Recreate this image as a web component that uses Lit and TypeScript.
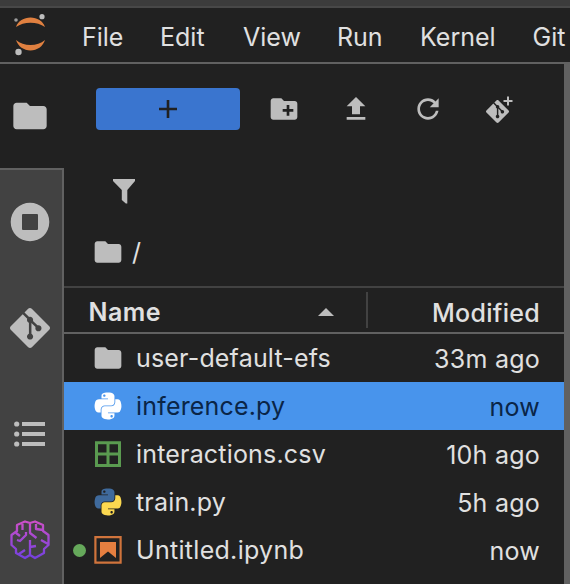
import { LitElement, html, css, svg } from "lit";
import { customElement } from "lit/decorators.js";

const FOLDER = "M10 4H4c-1.1 0-1.99.9-1.99 2L2 18c0 1.1.9 2 2 2h16c1.1 0 2-.9 2-2V8c0-1.1-.9-2-2-2h-8l-2-2z";
const GIT = "M23.546 10.93L13.067.452c-.604-.603-1.582-.603-2.188 0L8.708 2.627l2.76 2.76c.645-.215 1.379-.07 1.889.441.516.515.658 1.258.438 1.9l2.658 2.66c.645-.223 1.387-.078 1.9.435.721.72.721 1.884 0 2.604-.719.719-1.881.719-2.6 0-.539-.541-.674-1.337-.404-1.996L12.86 8.955v6.525c.176.086.342.203.488.348.713.721.713 1.883 0 2.6-.719.721-1.889.721-2.609 0-.719-.719-.719-1.879 0-2.598.182-.18.387-.316.605-.406V8.835c-.217-.091-.424-.222-.6-.401-.545-.545-.676-1.342-.396-2.009L7.636 3.7.45 10.881c-.6.605-.6 1.584 0 2.189l10.48 10.477c.604.604 1.582.604 2.186 0l10.43-10.43c.605-.603.605-1.582 0-2.187";
const PY_TOP = "M 54.918785,9.1927421e-4 C 50.335132,0.02221727 45.957846,0.41313697 42.106285,1.0946693 30.760069,3.0991731 28.700036,7.2947714 28.700035,15.032169 v 10.21875 h 26.8125 v 3.40625 h -26.8125 -10.0625 c -7.792459,0 -14.6157588,4.683717 -16.7499998,13.59375 -2.46181998,10.212966 -2.57101508,16.586023 0,27.25 1.9059283,7.937852 6.4575432,13.593748 14.2499998,13.59375 h 9.21875 v -12.25 c 0,-8.849902 7.657144,-16.656248 16.75,-16.65625 h 26.78125 c 7.454951,0 13.406253,-6.138164 13.40625,-13.625 v -25.53125 c 0,-7.2663386 -6.12998,-12.7247771 -13.40625,-13.9374997 C 64.281548,0.32794397 59.502438,-0.02037903 54.918785,9.1927421e-4 Z m -14.5,8.21875012579 c 2.769547,0 5.03125,2.2986456 5.03125,5.1249996 -2e-6,2.816336 -2.261703,5.09375 -5.03125,5.09375 -2.779476,-1e-6 -5.03125,-2.277415 -5.03125,-5.09375 -10e-7,-2.826353 2.251774,-5.1249996 5.03125,-5.1249996 z";
const PY_BOTTOM = "m 85.637535,28.657169 v 11.90625 c 0,9.230755 -7.825895,16.999999 -16.75,17 h -26.78125 c -7.335833,0 -13.406249,6.278483 -13.40625,13.625 v 25.531247 c 0,7.266344 6.318588,11.540324 13.40625,13.625004 8.487331,2.49561 16.626237,2.94663 26.78125,0 6.750155,-1.95439 13.406253,-5.88761 13.40625,-13.625004 V 86.500919 h -26.78125 v -3.40625 h 26.78125 13.406254 c 7.792461,0 10.696251,-5.435408 13.406241,-13.59375 2.79933,-8.398886 2.68022,-16.475776 0,-27.25 -1.92578,-7.757441 -5.60387,-13.59375 -13.406241,-13.59375 z m -15.0625,64.65625 c 2.779478,3e-6 5.03125,2.277417 5.03125,5.093747 -2e-6,2.826354 -2.251775,5.125004 -5.03125,5.125004 -2.76955,0 -5.03125,-2.29865 -5.03125,-5.125004 2e-6,-2.81633 2.261697,-5.093747 5.03125,-5.093747 z";

const icon = (size: number, body: unknown, box = "0 0 24 24") =>
  html`<svg width=${size} height=${size} viewBox=${box} fill="#bdbdbd">${body}</svg>`;
const folder = (size: number) => icon(size, svg`<path d=${FOLDER} />`);
const python = (top: string, bottom: string) =>
  icon(32, svg`<path fill=${top} d=${PY_TOP} /><path fill=${bottom} d=${PY_BOTTOM} />`, "-10 -10 131.16 132.39");

const FILES = [
  { name: "user-default-efs", age: "33m ago", glyph: folder(32), cls: "efs" },
  { name: "inference.py", age: "now", glyph: python("#fff", "#fff"), cls: "selected" },
  {
    name: "interactions.csv", age: "10h ago", cls: "csv",
    glyph: icon(32, svg`<path fill="none" stroke="#5a9a50" stroke-width="3" d="M4.5 4.7h23v22.8h-23zM16 4.7v22.8M4.5 16h23" />`, "0 0 32 32"),
  },
  { name: "train.py", age: "5h ago", glyph: python("#3f6a9c", "#fbd850"), cls: "train" },
  {
    name: "Untitled.ipynb", age: "now", cls: "running",
    glyph: icon(32, svg`<path fill="none" stroke="#d0743c" stroke-width="2.2" d="M3.4 3.2h25.2v25.4H3.4z" /><path fill="#e67f40" d="M8 8h16v16l-8-6.5L8 24z" />`, "0 0 32 32"),
  },
];

@customElement("app-root")
export class AppRoot extends LitElement {
  static styles = css`
    :host { display: flex; flex-direction: column; width: 570px; height: 584px; overflow: hidden; background: #212121; color: #e0e0e0; font: 425 25px/30px Inter, "Liberation Sans", sans-serif; }
    * { box-sizing: border-box; }
    svg { display: block; flex: none; }
    .strip { height: 8px; flex: none; background: #3c3c3c; border-bottom: 2px solid #484848; }
    .menubar { height: 56px; flex: none; display: flex; align-items: center; border-bottom: 2px solid #616161; white-space: nowrap; }
    .logo { width: 82px; flex: none; }
    .menu { flex: none; padding-top: 3px; letter-spacing: 0; }
    .file { width: 78px; } .edit { width: 83px; } .view { width: 94px; } .run { width: 83px; } .kernel { width: 112.5px; }
    .body { flex: 1; display: flex; min-height: 0; }
    .side { width: 64px; flex: none; display: flex; flex-direction: column; }
    .active { height: 104px; padding: 32px 0 0 10px; }
    .tabs { flex: 1; background: #424242; border: 2px solid #616161; border-width: 2px 2px 0 0; padding: 32px 0 0 10px; display: flex; flex-direction: column; gap: 66px; }
    .main { width: 500px; display: flex; flex-direction: column; }
    .edge { width: 6px; background: #616161; }
    .tools { height: 90px; padding: 0 0 0 32px; display: flex; align-items: center; gap: 40px; }
    .new { flex: none; width: 144px; height: 42px; border-radius: 4px; background: #3a75cf; display: flex; align-items: center; justify-content: center; margin-right: -12px; }
    .filter { height: 72px; padding: 20px 0 0 44px; }
    .crumbs { height: 60px; display: flex; align-items: center; gap: 8px; padding: 0 0 8px 28px; }
    .head { height: 48px; border-top: 2px solid #424242; border-bottom: 2px solid #616161; display: flex; align-items: center; padding: 3px 24px 0 24.5px; font-weight: 600; letter-spacing: 0.5px; }
    .caret { margin-left: auto; margin-right: 31px; }
    .divider { width: 2px; height: 36px; background: #424242; margin: -4px 0 0; }
    .modified { width: 172px; text-align: right; padding-top: 2px; font-weight: 550; letter-spacing: 0.3px; }
    .row { height: 48px; display: flex; align-items: center; padding: 0 24px 0 9px; white-space: nowrap; letter-spacing: 0.18px; }
    .dot { width: 13px; height: 13px; border-radius: 50%; margin-right: 6px; }
    .running .dot { background: #66a95b; }
    .name { margin-left: 12px; flex: 1; }
    .age { padding-top: 2px; letter-spacing: 0.25px; }
    .running .name { letter-spacing: 0.3px; }
    .selected { background: #4894ec; color: #0a2547; }
  `;

  render() {
    return html`
      <div class="strip"></div>
      <div class="menubar">
        <div class="logo">
          <svg width="60" height="54" viewBox="0 8 60 54">
            <path fill="#e08040" d="M16 27C18 21 24 17.600 30.500 17.600S43 21 45 27C41 24.300 36 22.800 30.500 22.800S20 24.300 16 27zM16 40C20 43.200 25 45 30.500 45S41 43.200 45 40C43 46.500 37 50.400 30.500 50.400S18 46.500 16 40z" />
            <circle cx="42" cy="16.700" r="2.600" fill="#bdbdbd" /><circle cx="16" cy="20" r="1.800" fill="#9e9e9e" /><circle cx="18.500" cy="52" r="3.200" fill="#bdbdbd" />
          </svg>
        </div>
        ${["File", "Edit", "View", "Run", "Kernel", "Git"].map((m) => html`<div class="menu ${m.toLowerCase()}">${m}</div>`)}
      </div>
      <div class="body">
        <div class="side">
          <div class="active">${folder(40)}</div>
          <div class="tabs">
            ${icon(40, svg`<path fill-rule="evenodd" d="M20 .7a19.300 19.300 0 1 0 0 38.600a19.300 19.300 0 1 0 0-38.600zM13 12h14a1 1 0 0 1 1 1v14a1 1 0 0 1-1 1H13a1 1 0 0 1-1-1V13a1 1 0 0 1 1-1z" />`, "0 0 40 40")}
            ${icon(40, svg`<path d=${GIT} />`)}
            ${icon(40, svg`<circle cx="6.700" cy="10" r="2.600" /><circle cx="6.700" cy="20" r="2.600" /><circle cx="6.700" cy="30" r="2.600" /><path d="M12 8h23v4H12zM12 18h23v4H12zM12 28h23v4H12z" />`, "0 0 40 40")}
            ${icon(40, svg`<defs><linearGradient id="g" gradientUnits="userSpaceOnUse" x1="0" y1="0" x2="0" y2="40"><stop offset="0" stop-color="#d050c8" /><stop offset="1" stop-color="#7040e0" /></linearGradient></defs>
              <path fill="none" stroke="url(#g)" stroke-width="2.300" stroke-linejoin="round" d="M20 3L15 1.500L7 5V11L1.500 15V25L6 29V33L15 38L20 35L25 38L34 33V29L38.500 25V15L33 11V5L25 1.500zM20 3V13L26.500 18M12.500 4V10M6 13L10 16M16 12V15L10 21L7 20M26 4V9L33 10M20 20V35M20 27L26 26M31 20L38 24M9 34L15 30" />`, "0 0 40 40")}
          </div>
        </div>
        <div class="main">
          <div class="tools">
            <div class="new">${icon(20, svg`<path fill="none" stroke="#212121" stroke-width="2.600" d="M10 1v18M1 10h18" />`, "0 0 20 20")}</div>
            ${icon(32, svg`<path d="M20 6h-8l-2-2H4c-1.110 0-1.990.890-1.990 2L2 18c0 1.110.890 2 2 2h16c1.110 0 2-.890 2-2V8c0-1.110-.890-2-2-2zm-1 8h-3v3h-2v-3h-3v-2h3V9h2v3h3v2z" />`)}
            ${icon(32, svg`<path d="M9 16h6v-6h4l-7-7-7 7h4zm-4 2h14v2H5z" />`)}
            ${icon(32, svg`<path d="M9 13.500c-2.490 0-4.500-2.010-4.500-4.500S6.510 4.500 9 4.500c1.240 0 2.360.520 3.170 1.330L10 8h5V3l-1.760 1.760C12.150 3.680 10.660 3 9 3 5.690 3 3.010 5.690 3.010 9S5.690 15 9 15c2.970 0 5.430-2.160 5.900-5h-1.520c-.460 2-2.240 3.500-4.380 3.500z" />`, "0 0 18 18")}
            ${icon(32, svg`<path transform="translate(2 7) scale(.96)" d=${GIT} /><path fill="none" stroke="#bdbdbd" stroke-width="2" d="M24 3.500v9M19.500 8h9" />`, "0 0 32 32")}
          </div>
          <div class="filter">${icon(32, svg`<path d="M5 5h22v2l-7.700 9v13.500h-1.500l-4-3.500V16L5 7z" />`, "0 0 32 32")}</div>
          <div class="crumbs">${folder(32)}<span>/</span></div>
          <div class="head">
            <span>Name</span>
            <svg class="caret" width="18" height="10" viewBox="0 0 18 10" fill="#bdbdbd"><path d="M1 9L9 1l8 8z" /></svg>
            <span class="divider"></span><span class="modified">Modified</span>
          </div>
          ${FILES.map((f) => html`<div class="row ${f.cls}"><span class="dot"></span>${f.glyph}<span class="name">${f.name}</span><span class="age">${f.age}</span></div>`)}
        </div>
        <div class="edge"></div>
      </div>`;
  }
}
